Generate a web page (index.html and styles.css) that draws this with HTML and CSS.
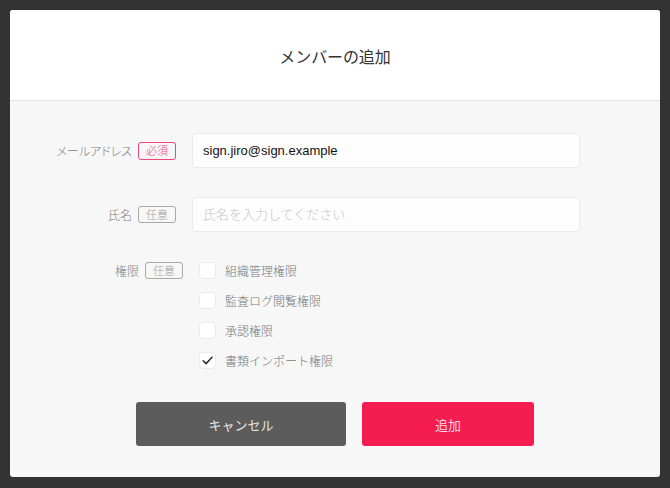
FILE: index.html
```html
<!DOCTYPE html>
<html lang="ja">
<head>
<meta charset="utf-8">
<title>メンバーの追加</title>
<link rel="stylesheet" href="styles.css">
</head>
<body>
<div class="modal">
  <div class="modal-header">
    <h1 class="modal-title">メンバーの追加</h1>
  </div>
  <div class="modal-body">
    <div class="form-row">
      <div class="form-label">
        <span class="label-text">メールアドレス</span>
        <span class="badge badge-required">必須</span>
      </div>
      <div class="form-field">
        <input class="text-input" type="text" value="sign.jiro@sign.example">
      </div>
    </div>
    <div class="form-row">
      <div class="form-label">
        <span class="label-text">氏名</span>
        <span class="badge badge-optional">任意</span>
      </div>
      <div class="form-field">
        <input class="text-input" type="text" placeholder="氏名を入力してください">
      </div>
    </div>
    <div class="form-row form-row-perms">
      <div class="form-label form-label-top">
        <span class="label-text">権限</span>
        <span class="badge badge-optional">任意</span>
      </div>
      <div class="checkbox-list">
        <label class="checkbox-item"><span class="checkbox"></span><span class="checkbox-text">組織管理権限</span></label>
        <label class="checkbox-item"><span class="checkbox"></span><span class="checkbox-text">監査ログ閲覧権限</span></label>
        <label class="checkbox-item"><span class="checkbox"></span><span class="checkbox-text">承認権限</span></label>
        <label class="checkbox-item"><span class="checkbox is-checked"><svg viewBox="0 0 17 17" width="17" height="17"><path d="M3.6 8.8 L6.9 12 L13.6 4.9" fill="none" stroke="#333" stroke-width="1.8" stroke-linecap="round" stroke-linejoin="round"/></svg></span><span class="checkbox-text">書類インポート権限</span></label>
      </div>
    </div>
    <div class="actions">
      <button class="btn btn-cancel" type="button">キャンセル</button>
      <button class="btn btn-primary" type="button">追加</button>
    </div>
  </div>
</div>
</body>
</html>
```
FILE: styles.css
```css
* { box-sizing: border-box; }
html, body { height: 100%; }
body {
  margin: 0;
  padding: 10px 10px 0 10px;
  background: #333333;
  font-family: "Noto Sans CJK JP", "Noto Sans", sans-serif;
  overflow: hidden;
}
.modal {
  width: 650px;
  height: 467px;
  background: #f7f7f7;
  border-radius: 3px;
  overflow: hidden;
  display: flex;
  flex-direction: column;
}
.modal-header {
  height: 91px;
  background: #ffffff;
  border-bottom: 1px solid #e4e4e4;
  display: flex;
  align-items: center;
  justify-content: center;
  padding-top: 2px;
}
.modal-title {
  margin: 0;
  font-size: 16px;
  font-weight: 400;
  color: #333333;
  letter-spacing: -0.1px;
}
.modal-body {
  flex: 1;
  padding: 32px 0 0 0;
  display: flex;
  flex-direction: column;
}
.form-row {
  display: flex;
  align-items: center;
  gap: 16px;
  margin-bottom: 29px;
}
.form-row-perms {
  align-items: flex-start;
  padding-left: 7px;
  margin-top: 1px;
  margin-bottom: 0;
}
.form-label {
  width: 166px;
  display: flex;
  align-items: center;
  justify-content: flex-end;
  gap: 6px;
}
.label-text {
  font-size: 12px;
  font-weight: 300;
  color: #808080;
  font-feature-settings: "palt";
}
.badge {
  display: inline-flex;
  align-items: center;
  justify-content: center;
  width: 38px;
  height: 18px;
  border-radius: 3px;
  font-size: 11px;
  font-weight: 300;
  line-height: 1;
  border: 1px solid;
}
.badge-required {
  color: #f0467a;
  border-color: #f0467a;
}
.badge-optional {
  color: #a0a0a0;
  border-color: #a8a8a8;
  height: 17px;
}
.form-field {
  width: 388px;
}
.text-input {
  display: block;
  width: 388px;
  height: 35px;
  margin: 0;
  padding: 0 10px;
  background: #fdfdfd;
  border: 1px solid #ebebeb;
  border-radius: 3px;
  font-family: "Liberation Sans", "Noto Sans CJK JP", sans-serif;
  font-size: 13px;
  color: #111111;
  outline: none;
}
.text-input::placeholder {
  font-family: "Noto Sans CJK JP", sans-serif;
  font-size: 13px;
  font-weight: 300;
  color: #c8c8c8;
}
.checkbox-list {
  display: flex;
  flex-direction: column;
  gap: 13px;
}
.checkbox-item {
  display: flex;
  align-items: center;
  gap: 9px;
  height: 17px;
}
.checkbox {
  width: 17px;
  height: 17px;
  background: #ffffff;
  border: 1px solid #ebebeb;
  border-radius: 4px;
  display: flex;
  align-items: center;
  justify-content: center;
  flex: none;
}
.checkbox svg { display: block; }
.checkbox-text {
  font-size: 12px;
  font-weight: 300;
  color: #777777;
}
.actions {
  display: flex;
  justify-content: center;
  gap: 16px;
  margin-top: 33px;
}
.btn {
  height: 44px;
  border: none;
  border-radius: 3px;
  font-family: "Noto Sans CJK JP", sans-serif;
  font-size: 13px;
  cursor: pointer;
}
.btn-cancel {
  width: 210px;
  background: #5c5c5c;
  color: #e6e6e6;
}
.btn-primary {
  width: 172px;
  background: #f51c4f;
  color: #ffd9e2;
}
```
